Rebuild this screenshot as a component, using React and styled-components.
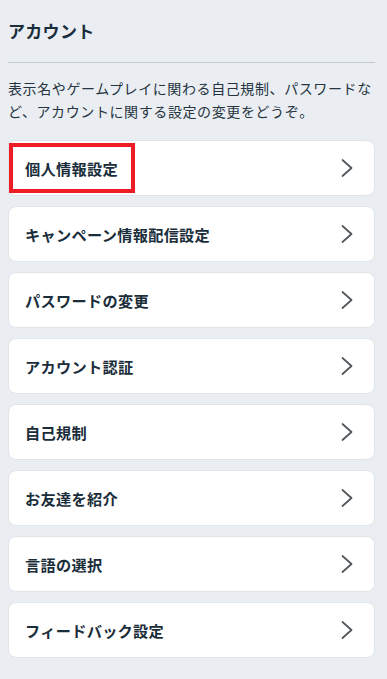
import React from 'react'
import styled, { createGlobalStyle } from 'styled-components'

const items = [
    { label: '個人情報設定', marked: true },
    { label: 'キャンペーン情報配信設定' },
    { label: 'パスワードの変更' },
    { label: 'アカウント認証' },
    { label: '自己規制' },
    { label: 'お友達を紹介' },
    { label: '言語の選択' },
    { label: 'フィードバック設定' },
]

function Chevron() {
    return (
        <svg width="12" height="18" viewBox="0 0 12 18" fill="none">
            <polyline points="1.5,1 10.5,9 1.5,17" stroke="#4f5559" strokeWidth="1.7" strokeLinecap="round" strokeLinejoin="round" />
        </svg>
    )
}

function App() {
    return (
        <>
            <GlobalStyle />
            <Page>
                <Title>アカウント</Title>
                <Divider />
                <Description>
                    表示名やゲームプレイに関わる自己規制、パスワードなど、アカウントに関する設定の変更をどうぞ。
                </Description>
                <Menu>
                    {items.map(item => (
                        <MenuItem key={item.label}>
                            <Label>{item.label}</Label>
                            <Chevron />
                            {item.marked && <Highlight />}
                        </MenuItem>
                    ))}
                </Menu>
            </Page>
        </>
    )
}

export default App

const GlobalStyle = createGlobalStyle`
    html, body {
        margin: 0;
        padding: 0;
        background: #eaeef2;
    }
    body {
        font-family: "Noto Sans CJK JP", "Noto Sans", sans-serif;
        color: #1a2d3a;
    }
`

const Page = styled.div`
    min-height: 679px;
    padding: 18px 12px 20px 8px;
    box-sizing: border-box;
    background: #eaeef2;
`

const Title = styled.h1`
    margin: 0;
    font-size: 17px;
    font-weight: 700;
    line-height: 26px;
    letter-spacing: 0.3px;
`

const Divider = styled.div`
    height: 1px;
    background: #c3cbd1;
    margin-top: 18px;
`

const Description = styled.p`
    margin: 14px 0 0;
    font-size: 14px;
    letter-spacing: 0.6px;
    line-height: 23px;
    color: #26343f;
`

const Menu = styled.div`
    display: flex;
    flex-direction: column;
    gap: 10px;
    margin-top: 17px;
`

const MenuItem = styled.div`
    position: relative;
    height: 56px;
    box-sizing: border-box;
    display: flex;
    align-items: center;
    justify-content: space-between;
    padding: 0 21px 0 16px;
    background: #ffffff;
    border: 1px solid #dfe5ea;
    border-radius: 8px;
    cursor: pointer;
`

const Label = styled.span`
    font-size: 15.2px;
    font-weight: 700;
    letter-spacing: 0.3px;
    color: #1a2d3a;
`

const Highlight = styled.div`
    position: absolute;
    left: 0;
    top: 2px;
    width: 126px;
    height: 50px;
    box-sizing: border-box;
    border: 4px solid #ee1c25;
    pointer-events: none;
`
